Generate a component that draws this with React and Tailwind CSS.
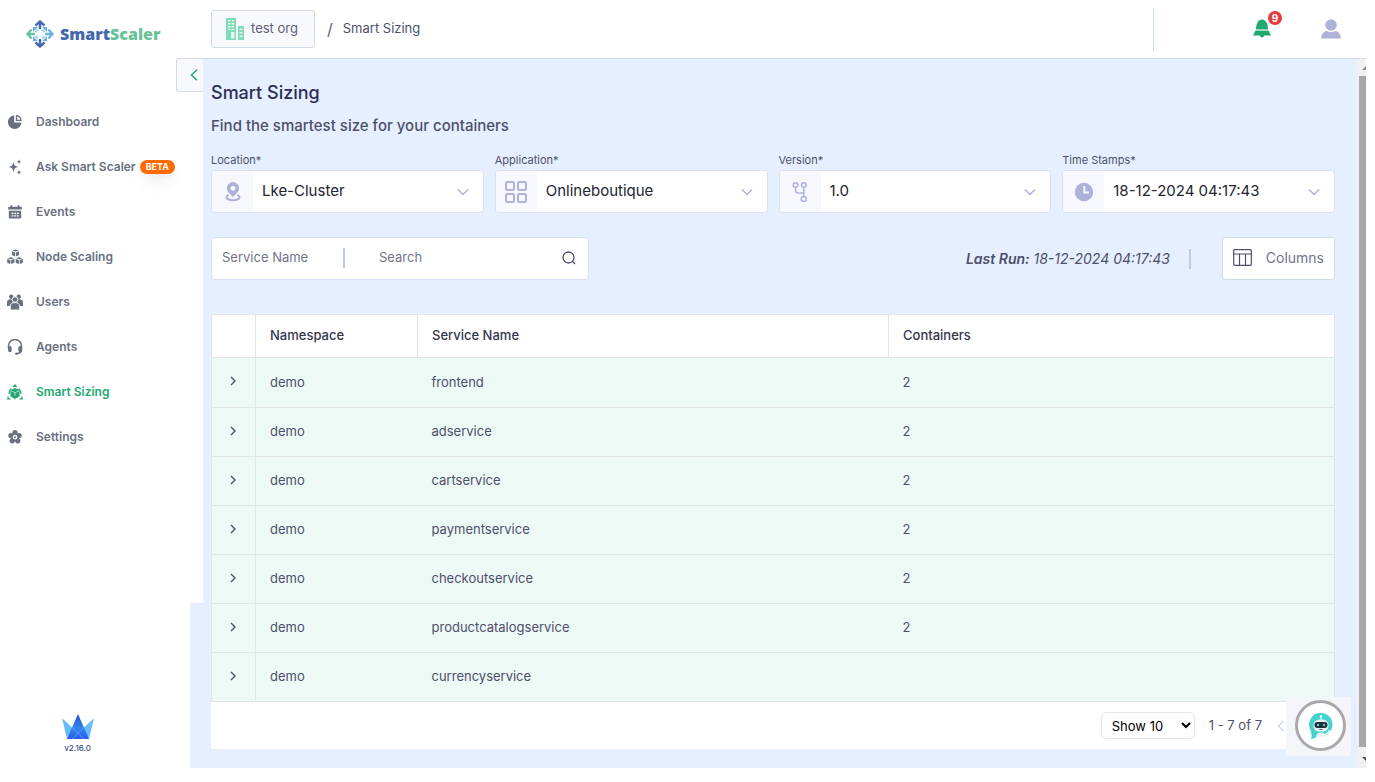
import React from "react";

const services = [
  ["demo", "frontend", "2"],
  ["demo", "adservice", "2"],
  ["demo", "cartservice", "2"],
  ["demo", "paymentservice", "2"],
  ["demo", "checkoutservice", "2"],
  ["demo", "productcatalogservice", "2"],
  ["demo", "currencyservice", ""],
];

function Logo() {
  return (
    <svg viewBox="0 0 28 28" className="size-7 shrink-0" fill="none" strokeWidth="2.400" aria-hidden="true">
      <g stroke="#4267ae">
        <path d="M14 9V1.500M9.500 5.500 14 1.500l4.500 4" />
        <path d="M14 19v7.500M9.500 22.500 14 26.500l4.500-4" />
      </g>
      <path d="M9 14H1.500M5.500 9.500 1.500 14l4 4.500" stroke="#67c297" />
      <path d="M19 14h7.500M22.500 9.500l4 4.500-4 4.500" stroke="#6ab4e4" />
      <path d="M7 7h5L9.500 9.500 7 12zM21 7h-5l2.500 2.500L21 12z" fill="#6ab4e4" />
      <path d="M7 21h5l-2.500-2.500L7 16zM21 21h-5l2.500-2.500L21 16z" fill="#6ab4e4" />
      <path d="M9.500 12 12 9.500M16 9.500l2.500 2.500M18.500 16 16 18.500M12 18.500 9.500 16" stroke="#a9d3ef" />
    </svg>
  );
}

function PieIcon() {
  return (
    <svg viewBox="0 0 16 16" className="size-4" fill="currentColor">
      <path d="M7.200 1.300a6.800 6.800 0 1 0 7.300 7.300H7.200z" />
      <path d="M9.500 1.700c2.400.3 4.300 2.300 4.600 4.700H9.500z" fill="none" stroke="currentColor" strokeWidth="1.300" strokeLinejoin="round" />
    </svg>
  );
}

function SparkleIcon() {
  return (
    <svg viewBox="0 0 16 16" className="size-4" fill="currentColor">
      <path d="M6.500 2.800C7.200 6.500 8 7.300 11.500 8 8 8.700 7.200 9.500 6.500 13.200 5.800 9.500 5 8.700 1.500 8 5 7.300 5.800 6.500 6.500 2.800z" />
      <path d="M12 .2c.4 1.700.8 2.100 2.500 2.500-1.700.4-2.100.8-2.500 2.500-.4-1.700-.8-2.100-2.500-2.500 1.700-.4 2.100-.8 2.500-2.500zM12 10.700c.4 1.700.8 2.100 2.500 2.500-1.700.4-2.100.8-2.500 2.500-.4-1.700-.8-2.100-2.500-2.500 1.700-.4 2.100-.8 2.500-2.500z" />
    </svg>
  );
}

function CalendarIcon() {
  return (
    <svg viewBox="0 0 16 16" className="size-4" fill="currentColor" fillRule="evenodd">
      <path d="M3.500 1.200h1.800v1.500h5.400V1.200h1.800v1.500h1.200c.7 0 1.100.4 1.100 1v1.700H1.200V3.700c0-.6.400-1 1.100-1h1.200z" />
      <path d="M1.800 6.700h12.400v6.600c0 .8-.5 1.300-1.300 1.300H3.100c-.8 0-1.300-.5-1.300-1.300zM4.500 8.700V10h2V8.700zM7.200 8.700V10h1.900V8.700zM9.800 8.700V10h2V8.700zM4.500 11.300v1.300h2v-1.300zM7.200 11.300v1.300h1.900v-1.300zM9.800 11.300v1.300h2v-1.300z" />
    </svg>
  );
}

function CubesIcon() {
  const cube = "M0-3.500 3.300-2.500 0-1.400-3.300-2.500zM-3.600-1.700-.4-.6v4l-3.200-1.300zM3.600-1.700.4-.6v4l3.200-1.300z";
  return (
    <svg viewBox="0 0 16 16" className="size-4" fill="currentColor">
      <path d={cube} transform="translate(8.500 4)" />
      <path d={cube} transform="translate(3.800 11.700)" />
      <path d={cube} transform="translate(12.300 11.700)" />
    </svg>
  );
}

function UsersIcon() {
  return (
    <svg viewBox="0 0 16 16" className="size-4" fill="currentColor">
      <circle cx="4.300" cy="2.700" r="2.200" />
      <circle cx="11.700" cy="2.700" r="2.200" />
      <path d="M0 12V8.500C0 6.300 1.500 5.200 4 5.200h8c2.500 0 4 1.100 4 3.300V12z" />
      <g stroke="white" strokeWidth=".9">
        <circle cx="8" cy="5.500" r="2.800" />
        <path d="M3.300 16v-3.500c0-2.500 1.700-4 4.700-4s4.700 1.500 4.700 4V16z" />
      </g>
    </svg>
  );
}

function HeadsetIcon() {
  return (
    <svg viewBox="0 0 16 16" className="size-4" fill="none" stroke="currentColor" strokeWidth="1.500" strokeLinecap="round">
      <path d="M1.500 9V7a6.500 6.500 0 0 1 13 0V11c0 2.300-1.500 3.500-5 3.600" />
      <path d="M2.900 8.700v2.800M13.100 8.700v2.800" strokeWidth="3.600" />
      <path d="M9 14.700h1.200" strokeWidth="2" />
    </svg>
  );
}

function SizingIcon() {
  return (
    <svg viewBox="0 0 16 16" className="size-4" fill="currentColor">
      <path d="M8 0l2.500 3h-5zM0 15.500l.9-3.700 1.100 2.200 2.300 1.500zM16 15.500l-.9-3.700L14 14l-2.300 1.500z" />
      <path d="M4.300 4.500C2.700 6 2 7.800 2 10M11.700 4.500C13.300 6 14 7.800 14 10" fill="none" stroke="currentColor" strokeWidth="1.100" />
      <path d="M8 4 12.600 6v6.300L8 15l-4.600-2.700V6z" />
      <path d="M3.900 6.700 8 8.700l4.100-2M8 8.700v3" fill="none" stroke="#c9ecdc" strokeWidth=".8" />
    </svg>
  );
}

function FlowerIcon() {
  return (
    <svg viewBox="0 0 16 16" className="size-4" fill="currentColor">
      <circle cx="8" cy="3.600" r="2.600" />
      <circle cx="12.100" cy="6.600" r="2.600" />
      <circle cx="10.800" cy="11.800" r="2.600" />
      <circle cx="5.200" cy="11.800" r="2.600" />
      <circle cx="3.900" cy="6.600" r="2.600" />
      <circle cx="8" cy="8.200" r="4.200" />
      <circle cx="8" cy="8.200" r="1.700" fill="none" stroke="white" strokeWidth="1.300" />
    </svg>
  );
}

const navItems = [
  { label: "Dashboard", Icon: PieIcon },
  { label: "Ask Smart Scaler", Icon: SparkleIcon, badge: "BETA" },
  { label: "Events", Icon: CalendarIcon },
  { label: "Node Scaling", Icon: CubesIcon },
  { label: "Users", Icon: UsersIcon },
  { label: "Agents", Icon: HeadsetIcon },
  { label: "Smart Sizing", Icon: SizingIcon, active: true },
  { label: "Settings", Icon: FlowerIcon },
];

function PinIcon() {
  return (
    <svg viewBox="0 0 24 24" className="size-6" fill="none" stroke="#aeb2db">
      <path d="M12 16.500C8.500 13.200 6.300 11 6.300 8.300a5.700 5.700 0 0 1 11.400 0c0 2.700-2.200 4.900-5.700 8.200z" fill="#aeb2db" />
      <circle cx="12" cy="8.300" r="2.400" fill="#f7f8fd" stroke="none" />
      <path d="M7 15.200c-3.300 2.300-1 5 5 5s8.300-2.700 5-5" strokeWidth="2" strokeLinecap="round" />
    </svg>
  );
}

function GridIcon() {
  return (
    <svg viewBox="0 0 24 24" className="size-6" fill="none" stroke="#aeb2db" strokeWidth="2">
      <rect x="2" y="2" width="8" height="8" rx="1.500" />
      <rect x="14" y="2" width="8" height="8" rx="1.500" />
      <rect x="2" y="14" width="8" height="8" rx="1.500" />
      <rect x="14" y="14" width="8" height="8" rx="1.500" />
    </svg>
  );
}

function BranchIcon() {
  return (
    <svg viewBox="0 0 24 24" className="size-6" fill="none" stroke="#aeb2db" strokeWidth="1.500">
      <circle cx="7.500" cy="5" r="2.300" />
      <circle cx="15.800" cy="5" r="2.300" />
      <circle cx="15.800" cy="19" r="2.500" />
      <path d="M7.500 7.300v3c0 1.700 1 2.700 2.700 2.700h5.600M15.800 7.300v9.200" />
    </svg>
  );
}

function ClockIcon() {
  return (
    <svg viewBox="0 0 24 24" className="size-6">
      <circle cx="12" cy="12" r="9.200" fill="#aeb2db" />
      <path d="M12.300 6v6.500H17" fill="none" stroke="#f7f8fd" strokeWidth="2" />
    </svg>
  );
}

const filters = [
  { id: "location", label: "Location*", value: "Lke-Cluster", Icon: PinIcon },
  { id: "application", label: "Application*", value: "Onlineboutique", Icon: GridIcon },
  { id: "version", label: "Version*", value: "1.0", Icon: BranchIcon },
  { id: "timestamps", label: "Time Stamps*", value: "18-12-2024 04:17:43", Icon: ClockIcon },
];

function Filter({ id, label, value, Icon }) {
  return (
    <div className="flex flex-col">
      <label htmlFor={id} className="text-[11px] leading-5 text-[#4d4f6c]">{label}</label>
      <div className="flex h-[43px] items-center overflow-hidden rounded-sm border border-[#d9def5] bg-white">
        <span className="flex h-full w-[41px] shrink-0 items-center justify-center bg-[#f7f8fd]"><Icon /></span>
        <div className="grid h-full min-w-0 flex-1 items-center">
          <select id={id} className="col-start-1 row-start-1 h-full w-full appearance-none bg-transparent pl-[9px] text-[15px] text-[#23252f]">
            <option>{value}</option>
          </select>
          <svg viewBox="0 0 12 8" className="pointer-events-none col-start-1 row-start-1 mr-[14px] h-2 w-3 justify-self-end" fill="none" stroke="#aeb2db" strokeWidth="1.500">
            <path d="M1 1.500 6 6.500l5-5" />
          </svg>
        </div>
      </div>
    </div>
  );
}

function Sidebar() {
  return (
    <aside className="flex w-[190px] shrink-0 flex-col bg-white">
      <a href="#home" className="flex items-center gap-1.5 pt-5 pl-[26px]">
        <Logo />
        <span className="font-['Open_Sans',sans-serif] text-[16px] leading-6 font-extrabold text-[#4267ae]">
          Smart<span className="text-[#67c297]">Scaler</span>
        </span>
      </a>
      <nav className="mt-[51px] flex flex-col">
        {navItems.map(({ label, Icon, badge, active }) => (
          <a
            key={label}
            href="#nav"
            className={
              active
                ? "flex h-[45px] items-center pl-[7px] text-[12px] font-semibold text-[#1fa86f]"
                : "flex h-[45px] items-center pl-[7px] text-[12px] font-semibold text-[#69707f]"
            }
          >
            <Icon />
            <span className="ml-[13px] whitespace-nowrap">{label}</span>
            {badge && (
              <span className="ml-1 rounded-full bg-[#ff6b00] px-1.5 text-[9px] leading-[14px] font-bold text-white shadow-lg">
                {badge}
              </span>
            )}
          </a>
        ))}
      </nav>
      <div className="mt-auto mb-[14px] flex w-[155px] flex-col items-center">
        <svg viewBox="0 0 32 26" className="h-[26px] w-8" aria-hidden="true">
          <defs>
            <linearGradient id="crown" x1="0" y1="0" x2="0" y2="1">
              <stop offset="0" stopColor="#2b4bd3" />
              <stop offset=".55" stopColor="#2f86ec" />
              <stop offset="1" stopColor="#2b5ceb" />
            </linearGradient>
          </defs>
          <path d="M0 4 22 25H5zM32 4 10 25h17z" fill="#68bbfb" />
          <path d="M16 0 27 25H5z" fill="url(#crown)" />
          <path d="M10 13.500 22 25M22 13.500 10 25" stroke="#68a9f7" strokeWidth=".7" />
        </svg>
        <span className="mt-0.5 text-[8px] leading-3 font-medium text-[#3c5087]">v2.16.0</span>
      </div>
    </aside>
  );
}

function Header() {
  return (
    <header className="flex h-[59px] shrink-0 items-center border-b border-[#cfdbe8] bg-white pl-[21px]">
      <button className="flex h-[38px] w-[104px] items-center gap-[7px] rounded-[3px] border border-[#cfdbe8] bg-[#f7f9fd] px-[14px] text-[13px] whitespace-nowrap text-[#5d6078]">
        <svg viewBox="0 0 18 22" className="h-[22px] w-[18px]" fill="#7fdcb5" aria-hidden="true">
          <path d="M0 0h10v22H0zM12 8h6v14h-6z" />
          <g fill="#e6f8f2">
            <path d="M2 2h2.500v1.500H2zM5.500 2H8v1.500H5.500zM2 5h2.500v1.500H2zM5.500 5H8v1.500H5.500zM2 8h2.500v1.500H2zM5.500 8H8v1.500H5.500zM2 11h2.500v1H2zM5.500 11H8v1H5.500zM5 14h3.500v6.500H5z" />
            <path d="M13.500 10.500h3V12h-3zM13.500 14h3v1.500h-3zM13.500 17.500h3V19h-3z" />
          </g>
        </svg>
        <span>test org</span>
      </button>
      <span className="ml-3 text-[16px] text-[#5d6078]">/</span>
      <span className="ml-[10px] text-[13px] text-[#4d4f6c]">Smart Sizing</span>
      <div className="ml-auto flex h-[43px] w-[213px] items-center border-l border-[#cfdbe8]">
        <button aria-label="Notifications" className="relative ml-[98px]">
          <svg viewBox="0 0 20 20" className="size-5" fill="#21a871">
            <path d="M4 10.500C4 5 6 .5 10 .5s6 4.500 6 10z" />
            <path d="M3.300 11.800h13.400L19 16.500h-6.800c-.3 2.600-4.100 2.600-4.400 0H1z" />
            <path d="M3.700 10.500h12.600v1.300H3.700z" fill="#a3dcc4" />
          </svg>
          <span className="absolute -top-2 left-4 flex size-[14px] items-center justify-center rounded-full bg-[#e53b3b] text-[10px] leading-none font-bold text-white">9</span>
        </button>
        <button aria-label="Account" className="ml-12">
          <svg viewBox="0 0 22 20" className="h-5 w-[22px]" fill="#aeb2db">
            <circle cx="11" cy="6" r="5.800" />
            <path d="M1 19.500c.6-5 3-7.300 5.500-7.500 2.500 1.500 6.500 1.500 9 0 2.500.2 4.900 2.500 5.500 7.500z" />
          </svg>
        </button>
      </div>
    </header>
  );
}

function ServiceTable() {
  return (
    <section className="mt-[34px] bg-white">
      <table className="w-full table-fixed border-collapse border border-[#e2e5e8] text-left text-[13px]">
        <colgroup>
          <col className="w-11" />
          <col className="w-[162px]" />
          <col className="w-[471px]" />
          <col />
        </colgroup>
        <thead>
          <tr className="h-[43px] text-[#33354e]">
            <th aria-label="Expand" className="border border-[#e2e5e8]" />
            <th className="border border-[#e2e5e8] px-[14px] font-medium">Namespace</th>
            <th className="border border-[#e2e5e8] px-[14px] font-medium">Service Name</th>
            <th className="border border-[#e2e5e8] px-[14px] font-medium">Containers</th>
          </tr>
        </thead>
        <tbody>
          {services.map(([namespace, service, containers]) => (
            <tr key={service} className="h-[49px] border-b border-[#e2e5e8] bg-[#edf9f5] text-[#4d4f6c] first:h-[50px]">
              <td className="border-r border-[#e2e5e8] pr-0.5 pb-1 text-center align-middle">
                <button aria-label={`Expand ${service}`} className="align-middle">
                  <svg viewBox="0 0 10 10" className="size-[10px]" fill="none" stroke="#4d4f6c" strokeWidth="1.400">
                    <path d="M3 1l4 4-4 4" />
                  </svg>
                </button>
              </td>
              <td className="px-[14px]">{namespace}</td>
              <td className="px-[14px]">{service}</td>
              <td className="px-[14px]">{containers}</td>
            </tr>
          ))}
        </tbody>
      </table>
      <div className="flex h-[47px] items-center justify-end pr-[50px] text-[13px] text-[#4d4f6c]">
        <select aria-label="Rows per page" className="h-[27px] w-[94px] rounded-md border border-[#e2e5e8] bg-white pl-1.5 text-[13px] text-black">
          <option>Show 10</option>
        </select>
        <span className="ml-[14px]">1 - 7 of 7</span>
        <button aria-label="Previous page" className="ml-[15px]">
          <svg viewBox="0 0 8 12" className="h-3 w-2" fill="none" stroke="#d5d7ee" strokeWidth="1.500">
            <path d="M6.500 1 1.500 6l5 5" />
          </svg>
        </button>
      </div>
    </section>
  );
}

function ChatWidget() {
  return (
    <div className="absolute right-[15px] bottom-3 flex h-[59px] w-[65px] items-center justify-center bg-[#f4f5f8] pb-0.5 pl-1">
      <button aria-label="Open chat assistant" className="flex size-[51px] items-center justify-center rounded-full border-3 border-[#a9a9a9] bg-white">
        <svg viewBox="0 0 26 28" className="h-7 w-[26px]">
          <path d="M13 1a11.500 11.500 0 0 1 0 23c-3 0-5 2.500-10.500 3C4.500 25 3.500 22 2.500 18A11.500 11.500 0 0 1 13 1z" fill="#43d3cc" />
          <path d="M13 3v5" stroke="#dff7f6" strokeWidth="1" />
          <circle cx="13" cy="4.500" r="1.200" fill="#eefcfb" />
          <rect x="5.500" y="7.500" width="15" height="12" rx="5.500" fill="#e9f3f5" />
          <rect x="6.500" y="10" width="13" height="6" rx="3" fill="#203038" />
          <circle cx="10" cy="13" r="1.200" fill="#59cbd2" />
          <circle cx="16" cy="13" r="1.200" fill="#59cbd2" />
          <path d="M11.500 17.500h3" stroke="#405058" strokeWidth=".9" />
          <path d="M8 25c0-3 2-4.500 5-4.500s5 1.500 5 4.500z" fill="#edf4f6" />
          <path d="M17 22.500c2.500-1 4-2.500 5-4.500" fill="none" stroke="#fff" strokeWidth="1.200" />
        </svg>
      </button>
    </div>
  );
}

function ScrollTrack() {
  return (
    <div className="flex w-[9px] shrink-0 flex-col overflow-hidden bg-[#f1f1f1] pl-[2px]" aria-hidden="true">
      <svg viewBox="0 0 7 17" className="h-[17px] w-[7px] shrink-0" fill="#8b8b8b"><path d="M3 11 7 7v4z" /></svg>
      <div className="flex-1 bg-[#a8a8a8]" />
      <svg viewBox="0 0 7 21" className="h-[21px] w-[7px] shrink-0" fill="#505050"><path d="M3 10h4v4z" /></svg>
    </div>
  );
}

export default function App() {
  return (
    <div className="min-h-screen bg-white pr-[9px] pb-[14px] font-[Inter,sans-serif]">
      <div className="relative flex min-h-[calc(100vh-14px)]">
        <Sidebar />
        <div className="flex min-w-0 flex-1 flex-col">
          <Header />
          <div className="relative flex flex-1 bg-[#e6efff]">
            <div className="h-[544px] w-[13px] shrink-0 bg-white" />
            <main className="min-w-0 flex-1 pt-5 pr-[22px] pb-[18px] pl-2">
              <h1 className="text-[18px] leading-7 font-medium text-[#2b2d55]">Smart Sizing</h1>
              <p className="mt-[7px] text-[15px] leading-6 font-medium text-[#4d4f6c]">Find the smartest size for your containers</p>
              <div className="mt-3 grid grid-cols-4 gap-[11px]">
                {filters.map((filter) => <Filter key={filter.id} {...filter} />)}
              </div>
              <div className="mt-6 flex items-center justify-between">
                <div className="flex h-[43px] w-[378px] items-center rounded-sm border border-[#d9def5] bg-white pr-3 pb-0.5 pl-[10px] text-[13px] text-[#717488]">
                  <button className="w-[121px] text-left">Service Name</button>
                  <span className="h-5 w-0.5 bg-[#bcc9ea]" />
                  <input aria-label="Search" placeholder="Search" className="ml-[34px] min-w-0 flex-1 bg-transparent placeholder:text-[#717488]" />
                  <button aria-label="Run search">
                    <svg viewBox="0 0 14 14" className="size-[14px]" fill="none" stroke="#4d4f6c" strokeWidth="1.300">
                      <circle cx="6.500" cy="6.500" r="5.500" />
                      <path d="m10.500 10.500 2.500 2.500" />
                    </svg>
                  </button>
                </div>
                <div className="flex items-center">
                  <p className="text-[14px] text-[#4d4f6c] italic"><strong className="font-semibold">Last Run:</strong> 18-12-2024 04:17:43</p>
                  <span className="ml-[19px] h-5 w-0.5 bg-[#bcc9ea]" />
                  <button className="ml-[31px] flex h-[43px] w-[113px] items-center justify-between rounded-[3px] border border-[#cfdbe8] bg-white px-[10px] pb-0.5 text-[14px] text-[#717488]">
                    <svg viewBox="0 0 19 17" className="h-[17px] w-[19px]" fill="none" stroke="#4d4f6c" strokeWidth="1.200">
                      <rect x=".7" y=".7" width="17.600" height="15.600" rx="1" />
                      <path d="M.7 5h17.600M6.500 5v11.300M12.500 5v11.300" />
                    </svg>
                    Columns
                  </button>
                </div>
              </div>
              <ServiceTable />
            </main>
            <ScrollTrack />
            <ChatWidget />
            <button aria-label="Collapse sidebar" className="absolute -top-px -left-[14px] flex h-[34px] w-[27px] items-center justify-center rounded-l-[3px] border border-r-0 border-[#cfdbe8] bg-[#f7f9fd] pl-2">
              <svg viewBox="0 0 8 12" className="h-3 w-2" fill="none" stroke="#21a871" strokeWidth="1.500">
                <path d="M7 .8 1.500 6 7 11.200" />
              </svg>
            </button>
          </div>
        </div>
      </div>
    </div>
  );
}
